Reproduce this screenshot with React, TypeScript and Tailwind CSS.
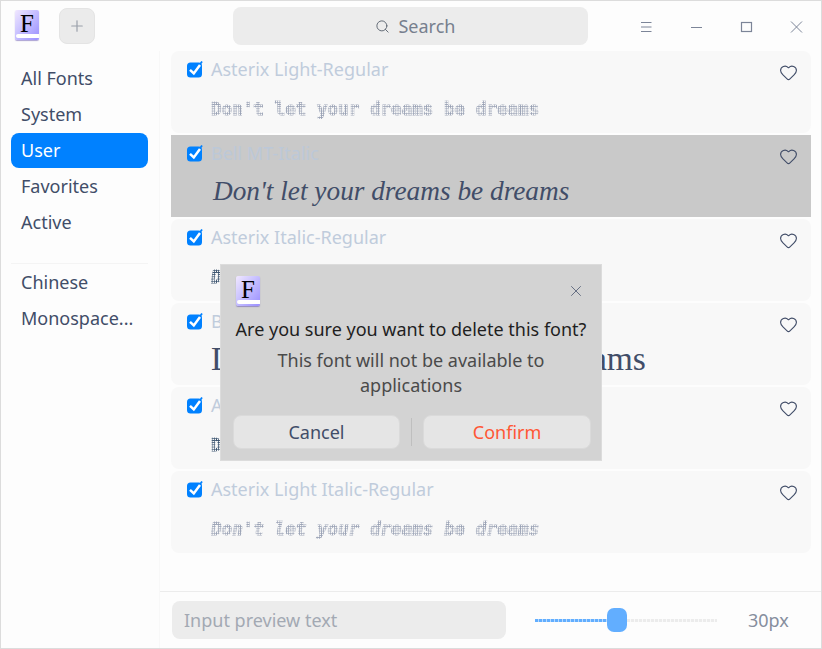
import { Heart, Plus, Search, X } from "lucide-react";

const FONT_ROWS = [
  { name: "Asterix Light-Regular", kind: "dots" },
  { name: "Bell MT-Italic", kind: "italic", selected: true },
  { name: "Asterix Italic-Regular", kind: "dotsDarkItalic" },
  { name: "Bell MT-Regular", kind: "regular" },
  { name: "Asterix Bold-Regular", kind: "dotsDark" },
  { name: "Asterix Light Italic-Regular", kind: "dotsItalic" },
];

const PREVIEW = "Don't let your dreams be dreams";

function Logo() {
  return (
    <div className="relative h-[30px] w-[24px] overflow-hidden rounded-[2px] bg-gradient-to-br from-[#f1e8ff] to-[#9a8eff] shadow-[0_1px_1px_rgba(90,70,170,0.5)]">
      <span className="absolute inset-x-0 top-[1px] text-center font-['Liberation_Serif',serif] text-[25px] leading-[26px] text-black">F</span>
      <div className="absolute bottom-[2px] left-[1px] right-0 h-[4px] rounded-l-[2px] bg-white" />
    </div>
  );
}

function Check() {
  return (
    <svg width="16" height="17" viewBox="0 0 16 17" className="shrink-0">
      <rect x="0" y="1.5" width="15" height="15" rx="3.5" fill="#0081ff" />
      <path d="M12.5 4 L15 0.5" stroke="#0081ff" strokeWidth="1.8" />
      <path d="M3 8.8 L6.8 12.4 L13 4" fill="none" stroke="#fff" strokeWidth="2.5" />
    </svg>
  );
}

function Preview({ kind }: { kind: string }) {
  if (kind === "italic")
    return <span className="ml-[2px] font-['Liberation_Serif',serif] text-[27.3px] italic leading-[40px] text-[#414d68]">{PREVIEW}</span>;
  if (kind === "regular")
    return <span className="font-['Liberation_Serif',serif] text-[33.5px] leading-[40px] text-[#414d68]">{PREVIEW}</span>;
  if (kind === "dots")
    return (
      <span className="bg-[radial-gradient(circle,#9aa2b5_0.8px,transparent_1px)] bg-[length:2.2px_2.2px] bg-clip-text font-['DejaVu_Sans_Mono',monospace] text-[17.6px] font-bold leading-[40px] text-transparent [-webkit-text-stroke:1px_transparent]">
        {PREVIEW}
      </span>
    );
  if (kind === "dotsDark")
    return (
      <span className="bg-[radial-gradient(circle,#37506c_0.9px,transparent_1px)] bg-[length:2.2px_2.2px] bg-clip-text font-['DejaVu_Sans_Mono',monospace] text-[17.6px] font-bold leading-[40px] text-transparent [-webkit-text-stroke:1px_transparent]">
        {PREVIEW}
      </span>
    );
  if (kind === "dotsDarkItalic")
    return (
      <span className="bg-[radial-gradient(circle,#37506c_0.9px,transparent_1px)] bg-[length:2.2px_2.2px] bg-clip-text font-['DejaVu_Sans_Mono',monospace] text-[17.6px] font-bold italic leading-[40px] text-transparent [-webkit-text-stroke:1px_transparent]">
        {PREVIEW}
      </span>
    );
  return (
    <span className="bg-[radial-gradient(circle,#9aa2b5_0.8px,transparent_1px)] bg-[length:2.2px_2.2px] bg-clip-text font-['DejaVu_Sans_Mono',monospace] text-[17.6px] font-bold italic leading-[40px] text-transparent [-webkit-text-stroke:1px_transparent]">
      {PREVIEW}
    </span>
  );
}

function FontRow({ row }: { row: (typeof FONT_ROWS)[number] }) {
  const serif = row.kind === "italic" || row.kind === "regular";
  return (
    <div className={`flex h-[82px] shrink-0 items-start pl-[16px] pr-[13px] pt-[6px] ${row.selected ? "bg-[#c9c9c9]" : "rounded-[8px] bg-[#f8f8f8]"}`}>
      <div className="min-w-0 flex-1">
        <div className="flex h-[24px] items-center gap-[8px]">
          <Check />
          <span className={`text-[18px] leading-[24px] ${row.selected ? "text-[#bcc8d8]" : "text-[#c0ccdc]"}`}>{row.name}</span>
        </div>
        <div className={`ml-[24px] whitespace-nowrap leading-[40px] ${serif ? "mt-[6px]" : "mt-[8px]"}`}>
          <Preview kind={row.kind} />
        </div>
      </div>
      <Heart size={19} strokeWidth={1.4} className="mt-[6px] text-[#414d68]" />
    </div>
  );
}

function SideItem({ label, active }: { label: string; active?: boolean }) {
  return (
    <div className={`flex items-center rounded-[8px] px-[10px] text-[18px] ${active ? "mt-[1px] h-[35px] bg-[#0081ff] text-white" : "h-[36px] text-[#414d68]"}`}>
      {label}
    </div>
  );
}

function WindowIcon({ children }: { children: React.ReactNode }) {
  return (
    <div className="flex h-[50px] w-[50px] items-center justify-center">
      <svg width="14" height="14" viewBox="0 0 14 14" fill="none" stroke="#7c8598" strokeWidth="1">
        {children}
      </svg>
    </div>
  );
}

export default function App() {
  return (
    <div className="relative flex h-[649px] w-[822px] flex-col overflow-hidden border border-[#dcdcdc] bg-[#fdfdfd] font-['Noto_Sans',sans-serif]">
      {/* title bar */}
      <div className="flex h-[50px] shrink-0 items-center">
        <div className="ml-[14px] mb-[2px]"><Logo /></div>
        <button className="ml-[20px] flex h-[36px] w-[36px] items-center justify-center rounded-[8px] border border-[#e4e4e4] bg-[#ebebeb]">
          <Plus size={18} strokeWidth={1.6} className="text-[#9aa0aa]" />
        </button>
        <div className="ml-[138px] flex h-[38px] w-[356px] items-center justify-center gap-[8px] rounded-[8px] bg-[#ececec] pl-[10px] text-[18px] text-[#777f8e]">
          <Search size={15} strokeWidth={1.5} className="text-[#5c6470]" />
          Search
        </div>
        <div className="ml-[33px] flex items-center pt-[2px]">
          <WindowIcon>
            <path d="M2 2.5 H12.5 M2 7 H12.5 M2 11.5 H12.5" />
          </WindowIcon>
          <WindowIcon>
            <path d="M2 7.5 H13" />
          </WindowIcon>
          <WindowIcon>
            <rect x="2.5" y="2.5" width="10" height="9" strokeWidth="1.2" />
          </WindowIcon>
          <WindowIcon>
            <path d="M2 1.5 L13 12.5 M13 1.5 L2 12.5" />
          </WindowIcon>
        </div>
      </div>

      <div className="flex min-h-0 flex-1">
        {/* sidebar */}
        <div className="flex w-[159px] shrink-0 flex-col border-r border-[#f8f8f8] pl-[10px] pr-[11px] pt-[9px]">
          <SideItem label="All Fonts" />
          <SideItem label="System" />
          <SideItem label="User" active />
          <SideItem label="Favorites" />
          <SideItem label="Active" />
          <div className="mt-[23px] h-px bg-[#f4f4f4]" />
          <SideItem label="Chinese" />
          <SideItem label="Monospace..." />
        </div>

        {/* main */}
        <div className="flex min-w-0 flex-1 flex-col">
          <div className="flex flex-1 flex-col gap-[2px] pl-[11px] pr-[10px]">
            {FONT_ROWS.map((row) => (
              <FontRow key={row.name} row={row} />
            ))}
          </div>
          <div className="flex h-[57px] shrink-0 items-center border-t border-[#ececec] pl-[12px]">
            <div className="flex h-[38px] w-[334px] items-center rounded-[8px] bg-[#ececec] px-[12px] text-[18px] text-[#a3a9b3]">
              Input preview text
            </div>
            <div className="relative ml-[29px] flex h-[24px] w-[182px] items-center">
              <div className="h-[3px] w-[72px] bg-[repeating-linear-gradient(90deg,#62aeff_0,#62aeff_3px,#b8dbff_3px,#b8dbff_4px)]" />
              <div className="h-[24px] w-[20px] rounded-[7px] bg-[#62aeff]" />
              <div className="h-[3px] flex-1 bg-[repeating-linear-gradient(90deg,#ececec_0,#ececec_3px,#fafafa_3px,#fafafa_4px)]" />
            </div>
            <span className="ml-[31px] text-[18px] text-[#868e9e]">30px</span>
          </div>
        </div>
      </div>

      {/* confirm dialog */}
      <div className="absolute left-[219px] top-[263px] flex h-[197px] w-[382px] flex-col border border-[#dcdcdc] bg-[#d3d3d3] px-[12px]">
        <div className="flex h-[52px] shrink-0 items-center justify-between pl-[3px] pr-[4px]">
          <Logo />
          <X size={18} strokeWidth={1} className="text-[#414d68]" />
        </div>
        <p className="whitespace-nowrap text-center text-[18px] leading-[24px] text-[#1f1f1f]">Are you sure you want to delete this font?</p>
        <p className="mx-auto mt-[7px] w-[320px] text-center text-[18px] leading-[25px] text-[#4a4a4a]">
          This font will not be available to applications
        </p>
        <div className="mb-[11px] mr-[-2px] mt-auto flex items-center">
          <button className="flex h-[34px] w-[167px] shrink-0 items-center justify-center rounded-[8px] border border-[#dadada] bg-[#e5e5e5] text-[18px] text-[#414d68]">Cancel</button>
          <div className="mx-[11px] h-[28px] w-px bg-[#bfbfbf]" />
          <button className="flex h-[34px] w-[168px] shrink-0 items-center justify-center rounded-[8px] border border-[#dadada] bg-[#e5e5e5] text-[18px] text-[#ff5736]">Confirm</button>
        </div>
      </div>
    </div>
  );
}
